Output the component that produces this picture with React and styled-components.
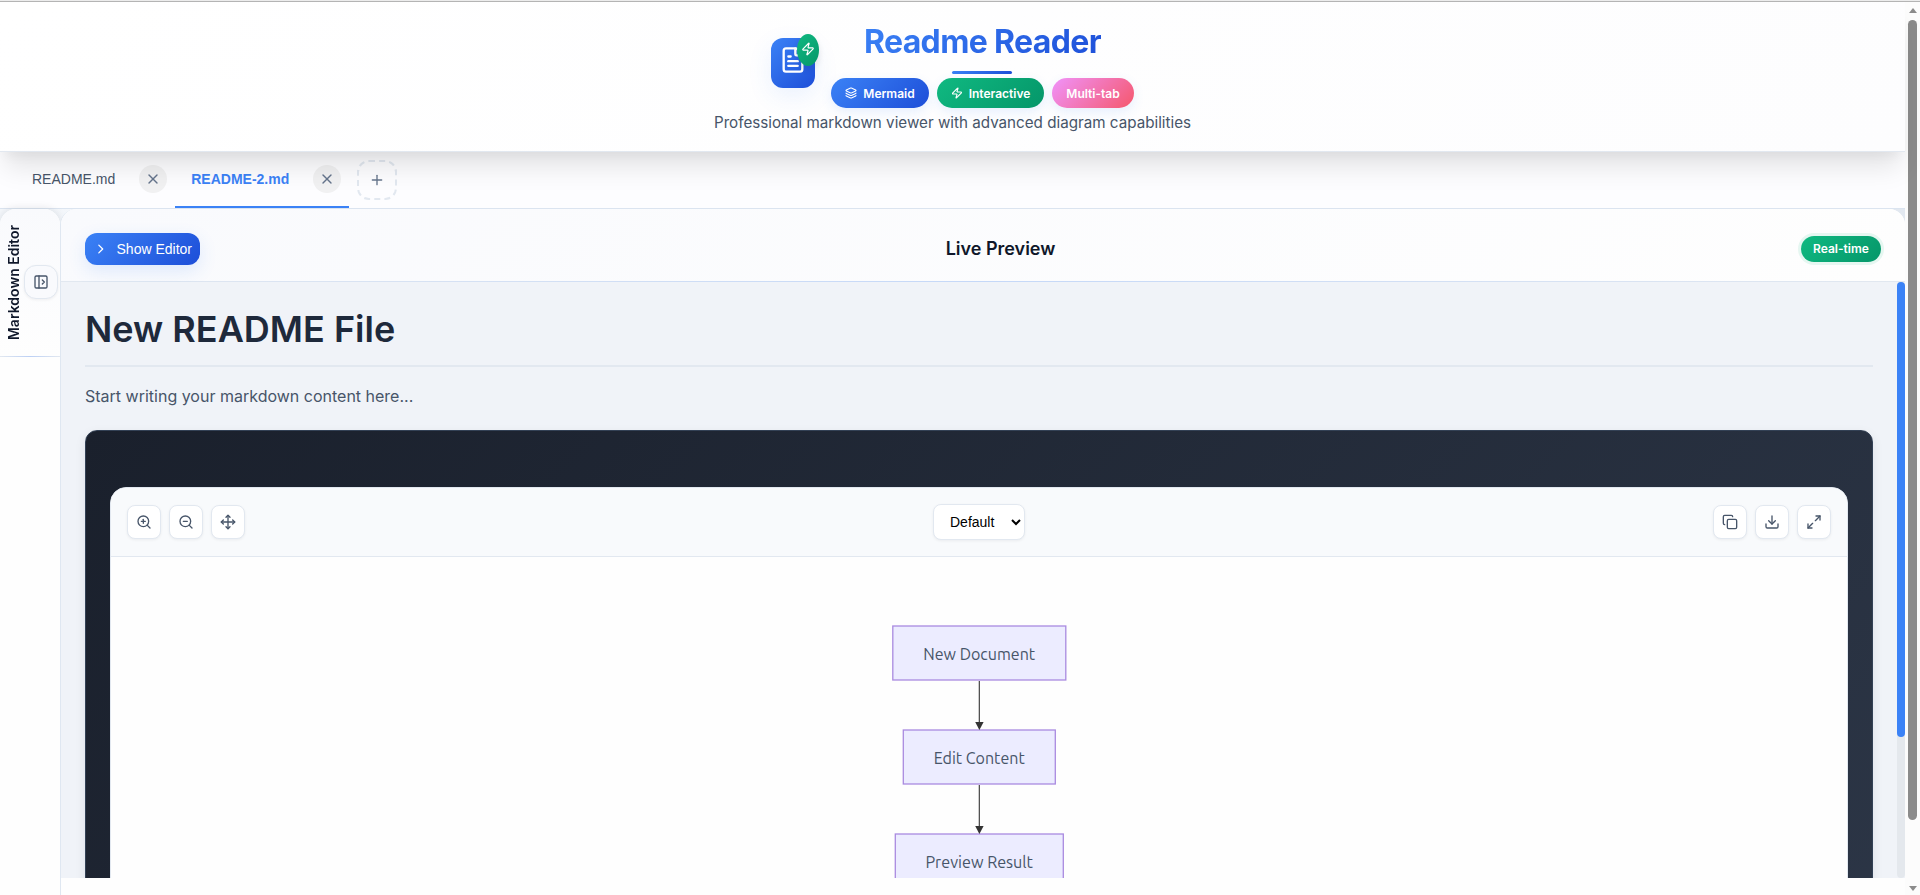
import React from "react";
import styled, { createGlobalStyle, css } from "styled-components";
import {
  FileText, Zap, Layers, X, Plus, ChevronRight, PanelLeftOpen,
  ZoomIn, ZoomOut, Move, Copy, Download, Maximize2,
} from "lucide-react";

const blue = "linear-gradient(135deg, #3b82f6 0%, #1d4ed8 100%)";
const green = "linear-gradient(135deg, #10b981 0%, #059669 100%)";
const pink = "linear-gradient(135deg, #f093fb 0%, #f5576c 100%)";

const GlobalStyle = createGlobalStyle`
  * { box-sizing: border-box; }
  body { margin: 0; overflow: hidden; background: #fefefe; }
  button, select { font-family: "Liberation Sans", Arial, sans-serif; }
`;

const Window = styled.div`
  display: flex;
  width: 1920px;
  height: 895px;
  overflow: hidden;
  border-top: 2px solid;
  border-image: linear-gradient(#ececec 1px, #b4b4b4 1px) 2 0 0 0;
  font-family: Inter, sans-serif;
  color: #475569;
`;

const Page = styled.div`
  display: flex;
  flex-direction: column;
  width: 1905px;
  height: 893px;
`;

const PageScrollbar = styled.div`
  display: flex;
  flex-direction: column;
  align-items: center;
  justify-content: space-between;
  width: 15px;
  padding: 6px 0 4px;
  background: #fcfcfc;
`;

const PageThumb = styled.div`
  width: 9px;
  height: 800px;
  margin: 7px 0 auto;
  border-radius: 5px;
  background: #8b8b8b;
`;

const Arrow = styled.div`
  border: 4.5px solid transparent;
  ${(p) => p.$up
    ? css`border-top: 0; border-bottom: 5px solid #8b8b8b;`
    : css`border-bottom: 0; border-top: 5px solid #8b8b8b;`}
`;

const Header = styled.header`
  position: relative;
  z-index: 2;
  flex: none;
  display: flex;
  flex-direction: column;
  align-items: center;
  height: 150px;
  background: linear-gradient(135deg, #ffffff, #fdfdfe);
  border-bottom: 1px solid #e2e8f0;
  box-shadow: 0 20px 25px -5px rgba(0, 0, 0, 0.1), 0 10px 10px -5px rgba(0, 0, 0, 0.04);
`;

const Brand = styled.div`
  display: flex;
  align-items: center;
  gap: 16px;
  height: 106px;
  padding-top: 16px;
`;

const Logo = styled.div`
  position: relative;
  width: 44px;
  height: 50px;
  padding: 8px;
  border-radius: 12px;
  background: ${blue};
  box-shadow: 0 8px 24px rgba(59, 130, 246, 0.1);
  color: #fff;
`;

const LogoBadge = styled.span`
  position: absolute;
  top: -4px;
  right: -4px;
  display: flex;
  align-items: center;
  justify-content: center;
  width: 22px;
  height: 32px;
  padding-bottom: 2px;
  border-radius: 50%;
  background: ${green};
  box-shadow: 0 4px 6px rgba(15, 23, 42, 0.1);
`;

const TitleBlock = styled.div`
  display: flex;
  flex-direction: column;
  align-items: center;
  height: 90px;
`;

const Title = styled.h1`
  height: 53px;
  margin: 0;
  font-size: 32px;
  line-height: 48px;
  font-weight: 700;
  letter-spacing: -0.64px;
  background: ${blue};
  background-clip: text;
  color: transparent;
`;

const TitleRule = styled.div`
  width: 60px;
  height: 3px;
  margin: 0 2px 4px 0;
  border-radius: 2px;
  background: ${blue};
`;

const Pills = styled.div`
  display: flex;
  gap: 8px;
`;

const Pill = styled.span`
  display: flex;
  align-items: center;
  justify-content: center;
  gap: 6px;
  width: ${(p) => p.$width}px;
  height: 30px;
  border-radius: 20px;
  background: ${(p) => p.$fill};
  box-shadow: 0 4px 12px rgba(59, 130, 246, 0.12);
  color: #fff;
  font-size: 12px;
  font-weight: 600;
`;

const Subtitle = styled.p`
  margin: 3px 0 0;
  font-size: 15.2px;
  line-height: 24px;
  white-space: nowrap;
`;

const TabBar = styled.nav`
  flex: none;
  display: flex;
  height: 57px;
  padding-left: 16px;
  background: #fdfdff;
  border-bottom: 1px solid #dbe4f0;
`;

const Tab = styled.div`
  display: flex;
  align-items: center;
  gap: 24px;
  height: 56px;
  padding: 0 8px 0 16px;
  border-bottom: 2px solid ${(p) => (p.$active ? "#3b82f6" : "transparent")};
  color: ${(p) => (p.$active ? "#3b82f6" : "#475569")};
  font: ${(p) => (p.$active ? 700 : 400)} 14px "Liberation Sans", Arial, sans-serif;
`;

const CloseButton = styled.button`
  display: flex;
  align-items: center;
  justify-content: center;
  width: 28px;
  height: 28px;
  padding: 0;
  border: 0;
  border-radius: 50%;
  background: #f1f1f2;
  color: #64748b;
`;

const AddButton = styled.button`
  display: flex;
  align-items: center;
  justify-content: center;
  width: 40px;
  height: 40px;
  margin: 8px 0 0 8px;
  padding: 0;
  border: 2px dashed #e2e8f0;
  border-radius: 12px;
  background: transparent;
  color: #64748b;
`;

const Workspace = styled.main`
  flex: 1;
  display: flex;
  min-height: 0;
  background: linear-gradient(90deg, #f4f7fb, #e2e8f0) top / 100% 20px no-repeat, #fefefe;
`;

const Sidebar = styled.aside`
  width: 60px;
  background: #fefefe;
  border-radius: 16px 16px 0 0;
  box-shadow: 0 0 8px rgba(15, 23, 42, 0.12);
`;

const SidebarHeader = styled.div`
  display: flex;
  align-items: center;
  gap: 2px;
  height: 148px;
  padding: 0 0 2px 5px;
  border-bottom: 1px solid;
  border-image: linear-gradient(90deg, #e2e8f0, #bcd0f5, #e2e8f0) 0 0 1 0;
  background: linear-gradient(#f9fafd, #fefefe);
  border-radius: 16px 16px 0 0;
`;

const SidebarTitle = styled.span`
  width: 17px;
  margin-top: 2px;
  writing-mode: vertical-rl;
  transform: rotate(180deg);
  text-align: center;
  color: #0f172a;
  font-size: 14px;
  line-height: 17px;
  font-weight: 600;
  white-space: nowrap;
`;

const IconButton = styled.button`
  display: flex;
  align-items: center;
  justify-content: center;
  width: 34px;
  height: 34px;
  padding: 0;
  border: 1px solid #e2e8f0;
  border-radius: ${(p) => p.$radius || 8}px;
  background: ${(p) => p.$fill || "#fff"};
  box-shadow: 0 1px 3px rgba(15, 23, 42, 0.06);
  color: #475569;
`;

const Preview = styled.section`
  flex: 1;
  display: flex;
  flex-direction: column;
  min-width: 0;
  z-index: 1;
  border-left: 1px solid #dfe7f1;
  border-radius: 16px 16px 0 0;
  background: #fefefe;
`;

const PreviewHeader = styled.div`
  flex: none;
  display: flex;
  align-items: center;
  justify-content: space-between;
  height: 73px;
  padding: 8px 24px 0;
  border-radius: 16px 16px 0 0;
  border-bottom: 1px solid;
  border-image: linear-gradient(90deg, #e2e8f0, #c5d8f8 50%, #e2e8f0) 0 0 1 0;
  background: linear-gradient(135deg, #f9fafd, #fefefe);
`;

const ShowEditor = styled.button`
  display: flex;
  align-items: center;
  gap: 8px;
  width: 115px;
  height: 32px;
  padding: 0 8px;
  border: 0;
  border-radius: 12px;
  background: ${blue};
  box-shadow: 0 6px 18px rgba(59, 130, 246, 0.14);
  color: #fff;
  font-size: 14px;
  white-space: nowrap;
`;

const PreviewTitle = styled.h2`
  margin: 0;
  color: #0f172a;
  font-size: 18px;
  line-height: 22px;
  font-weight: 600;
`;

const LiveBadge = styled.span`
  width: 80px;
  height: 26px;
  border-radius: 13px;
  background: ${green};
  box-shadow: 0 0 0 3px rgba(16, 185, 129, 0.1);
  color: #fff;
  font-size: 12px;
  line-height: 26px;
  font-weight: 600;
  text-align: center;
`;

const Scroller = styled.div`
  flex: none;
  display: flex;
  height: 596px;
  overflow: hidden;
  background: #f0f3f8;
`;

const Article = styled.article`
  flex: 1;
  padding: 24px 24px 0;
`;

const ScrollTrack = styled.div`
  width: 8px;
  height: 596px;
  border-radius: 4px;
  background: #e4e8ed;
`;

const ScrollThumb = styled.div`
  height: 455px;
  border-radius: 4px;
  background: #3b82f6;
`;

const DocTitle = styled.h1`
  height: 61px;
  margin: 0 0 17px;
  border-bottom: 2px solid #e2e8f0;
  color: #1e293b;
  font-size: 36px;
  line-height: 47px;
  font-weight: 600;
`;

const DocText = styled.p`
  margin: 0 0 21px;
  font-size: 16px;
  line-height: 25px;
`;

const Stage = styled.div`
  height: 700px;
  padding: 56px 24px 0;
  border: 1px solid #334155;
  border-radius: 12px;
  background: linear-gradient(135deg, #1a202c, #2d3748);
  box-shadow: 0 4px 12px rgba(15, 23, 42, 0.08);
`;

const Card = styled.div`
  height: 640px;
  border: 1px solid #e2e8f0;
  border-radius: 16px;
  background: #fefefe;
  overflow: hidden;
`;

const Toolbar = styled.div`
  display: flex;
  align-items: center;
  justify-content: space-between;
  height: 69px;
  padding: 0 16px;
  border-bottom: 1px solid #e2e8f0;
  background: #f8fafc;
`;

const ButtonGroup = styled.div`
  display: flex;
  gap: 8px;
`;

const ThemeSelect = styled.select`
  width: 92px;
  height: 36px;
  padding: 0 0 0 12px;
  border: 1px solid #e2e8f0;
  border-radius: 8px;
  background: #fff;
  box-shadow: 0 1px 3px rgba(15, 23, 42, 0.06);
  color: #000;
  font-size: 14px;
`;

const Diagram = styled.svg`
  display: block;
  margin: 68px auto 0;
  font-family: Ubuntu, "Noto Sans", sans-serif;
  font-size: 16px;
`;

const nodes = [
  { label: "New Document", x: 3.8, y: 0, width: 173, textWidth: 112 },
  { label: "Edit Content", x: 14.3, y: 104, width: 152, textWidth: 91 },
  { label: "Preview Result", x: 6.3, y: 208, width: 168, textWidth: 107.5 },
];

function Flowchart() {
  return (
    <Diagram width="180" height="270" viewBox="0 -1 180 270">
      {nodes.map((n) => (
        <g key={n.label}>
          <rect x={n.x} y={n.y} width={n.width} height="54" fill="#ececff" stroke="#a98ae0" strokeWidth="1.3" />
          <text x="90.2" y="34" dy={n.y} textAnchor="middle" textLength={n.textWidth} lengthAdjust="spacingAndGlyphs" fill="#475569">
            {n.label}
          </text>
        </g>
      ))}
      {[55, 159].map((y) => (
        <g key={y}>
          <path d={`M90.3 ${y}v42`} stroke="#333" strokeWidth="1.1" />
          <path d={`M86.2 ${y + 41}h8.4l-4.2 8z`} fill="#333" />
        </g>
      ))}
    </Diagram>
  );
}

export default function App() {
  return (
    <>
      <GlobalStyle />
      <Window>
        <Page>
          <Header>
            <Brand>
              <Logo>
                <FileText size={28} />
                <LogoBadge><Zap size={14} /></LogoBadge>
              </Logo>
              <TitleBlock>
                <Title>Readme Reader</Title>
                <TitleRule />
                <Pills>
                  <Pill $width={98} $fill={blue}><Layers size={12} strokeWidth={2.3} />Mermaid</Pill>
                  <Pill $width={107} $fill={green}><Zap size={12} strokeWidth={2.3} />Interactive</Pill>
                  <Pill $width={82} $fill={pink}>Multi-tab</Pill>
                </Pills>
              </TitleBlock>
            </Brand>
            <Subtitle>Professional markdown viewer with advanced diagram capabilities</Subtitle>
          </Header>
          <TabBar>
            <Tab>README.md<CloseButton><X size={16} /></CloseButton></Tab>
            <Tab $active>README-2.md<CloseButton><X size={16} /></CloseButton></Tab>
            <AddButton><Plus size={16} /></AddButton>
          </TabBar>
          <Workspace>
            <Sidebar>
              <SidebarHeader>
                <SidebarTitle>Markdown Editor</SidebarTitle>
                <IconButton $radius={12} $fill="#f9fafd"><PanelLeftOpen size={16} /></IconButton>
              </SidebarHeader>
            </Sidebar>
            <Preview>
              <PreviewHeader>
                <ShowEditor><ChevronRight size={16} /><span>Show Editor</span></ShowEditor>
                <PreviewTitle>Live Preview</PreviewTitle>
                <LiveBadge>Real-time</LiveBadge>
              </PreviewHeader>
              <Scroller>
                <Article>
                  <DocTitle>New README File</DocTitle>
                  <DocText>Start writing your markdown content here...</DocText>
                  <Stage>
                    <Card>
                      <Toolbar>
                        <ButtonGroup>
                          <IconButton><ZoomIn size={16} /></IconButton>
                          <IconButton><ZoomOut size={16} /></IconButton>
                          <IconButton><Move size={16} /></IconButton>
                        </ButtonGroup>
                        <ThemeSelect defaultValue="Default"><option>Default</option></ThemeSelect>
                        <ButtonGroup>
                          <IconButton><Copy size={16} /></IconButton>
                          <IconButton><Download size={16} /></IconButton>
                          <IconButton><Maximize2 size={16} /></IconButton>
                        </ButtonGroup>
                      </Toolbar>
                      <Flowchart />
                    </Card>
                  </Stage>
                </Article>
                <ScrollTrack><ScrollThumb /></ScrollTrack>
              </Scroller>
            </Preview>
          </Workspace>
        </Page>
        <PageScrollbar>
          <Arrow $up />
          <PageThumb />
          <Arrow />
        </PageScrollbar>
      </Window>
    </>
  );
}
